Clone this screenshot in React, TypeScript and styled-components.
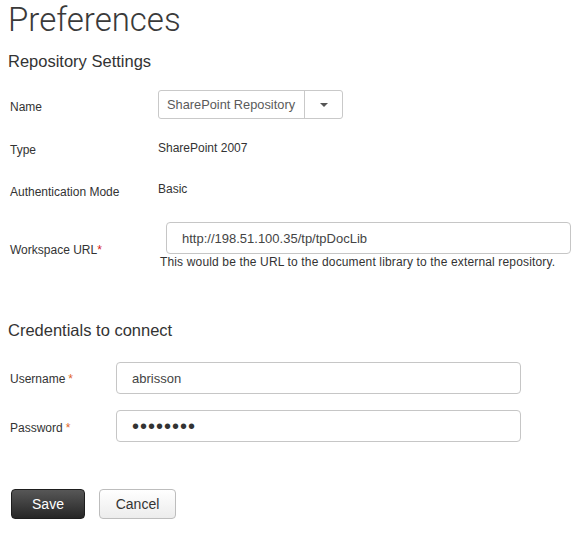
import React from 'react';
import styled, { createGlobalStyle } from 'styled-components';

const GlobalStyle = createGlobalStyle`
  html, body {
    margin: 0;
    padding: 0;
    background: #ffffff;
  }
  body {
    font-family: 'Liberation Sans', Arial, sans-serif;
    color: #333333;
  }
`;

/**
 * 页面容器
 */
const Page = styled.div`
  width: 577px;
  padding: 0 8px;
  box-sizing: border-box;
  display: flex;
  flex-direction: column;
`;

const PageTitle = styled.h1`
  margin: 0;
  font-family: Roboto, 'Liberation Sans', sans-serif;
  font-weight: 300;
  font-size: 33px;
  line-height: 39px;
  color: #3a3a3a;
`;

const SectionTitle = styled.h2<{ $top: number }>`
  margin: ${p => p.$top}px 0 0 0;
  font-weight: 400;
  font-size: 16.5px;
  line-height: 20px;
  color: #333333;
`;

/**
 * 表单行
 */
const Row = styled.div<{ $top: number; $labelWidth: number }>`
  display: grid;
  grid-template-columns: ${p => p.$labelWidth}px 1fr;
  align-items: start;
  margin-top: ${p => p.$top}px;
`;

const Label = styled.label<{ $offset: number }>`
  padding: ${p => p.$offset}px 0 0 2px;
  font-size: 12px;
  line-height: 14px;
  color: #333333;
`;

const Required = styled.span<{ $spaced?: boolean }>`
  color: ${p => (p.$spaced ? '#e0662a' : '#d42020')};
  margin-left: ${p => (p.$spaced ? '3px' : '0')};
`;

const ValueText = styled.div`
  font-size: 12px;
  line-height: 14px;
  color: #333333;
`;

/**
 * 下拉选择框
 */
const Select = styled.div`
  display: flex;
  width: 185px;
  height: 29px;
  box-sizing: border-box;
  border: 1px solid #c9c9c9;
  border-radius: 3px;
  background: #ffffff;
`;

const SelectValue = styled.div`
  flex: 1;
  display: flex;
  align-items: center;
  padding-left: 8px;
  font-size: 12.8px;
  color: #5a5a5a;
  border-right: 1px solid #c9c9c9;
`;

const SelectArrow = styled.div`
  width: 37px;
  display: flex;
  align-items: center;
  justify-content: center;

  &::after {
    content: '';
    border-left: 4px solid transparent;
    border-right: 4px solid transparent;
    border-top: 4px solid #555555;
  }
`;

const ValueColumn = styled.div`
  display: flex;
  flex-direction: column;
`;

const TextInput = styled.input<{ $indent: number; $width: number }>`
  margin-left: ${p => p.$indent}px;
  width: ${p => p.$width}px;
  height: 32px;
  box-sizing: border-box;
  border: 1px solid #c6c6c6;
  border-radius: 4px;
  padding: 0 0 0 15px;
  font-family: 'Liberation Sans', Arial, sans-serif;
  font-size: 13px;
  color: #444444;
  background: #ffffff;
  outline: none;

  &[type='password'] {
    font-size: 20px;
    letter-spacing: 1px;
    color: #333333;
  }
`;

const HelpText = styled.div`
  margin: 1px 0 0 2px;
  font-size: 12px;
  line-height: 14px;
  letter-spacing: 0.15px;
  color: #333333;
`;

const Actions = styled.div`
  display: flex;
  gap: 14px;
  margin: 47px 0 0 3px;
`;

const Button = styled.button<{ $primary?: boolean }>`
  height: 30px;
  box-sizing: border-box;
  padding: 0;
  width: ${p => (p.$primary ? '74px' : '77px')};
  border-radius: 4px;
  font-family: 'Liberation Sans', Arial, sans-serif;
  font-size: 14px;
  cursor: pointer;
  border: 1px solid ${p => (p.$primary ? '#1e1e1e' : '#bdbdbd')};
  color: ${p => (p.$primary ? '#ffffff' : '#333333')};
  background: ${p =>
    p.$primary
      ? 'linear-gradient(#575757, #262626)'
      : 'linear-gradient(#ffffff, #ececec)'};
`;

const App: React.FC = () => {
  return (
    <>
      <GlobalStyle />
      <Page>
        <PageTitle>Preferences</PageTitle>
        <SectionTitle $top={12}>Repository Settings</SectionTitle>

        <Row $top={19} $labelWidth={150}>
          <Label $offset={10}>Name</Label>
          <Select>
            <SelectValue>SharePoint Repository</SelectValue>
            <SelectArrow />
          </Select>
        </Row>

        <Row $top={22} $labelWidth={150}>
          <Label $offset={2}>Type</Label>
          <ValueText>SharePoint 2007</ValueText>
        </Row>

        <Row $top={25} $labelWidth={150}>
          <Label $offset={3}>Authentication Mode</Label>
          <ValueText>Basic</ValueText>
        </Row>

        <Row $top={23} $labelWidth={150}>
          <Label $offset={21}>
            Workspace URL<Required>*</Required>
          </Label>
          <ValueColumn>
            <TextInput
              $indent={8}
              $width={405}
              type="text"
              defaultValue="http://198.51.100.35/tp/tpDocLib"
            />
            <HelpText>
              This would be the URL to the document library to the external repository.
            </HelpText>
          </ValueColumn>
        </Row>

        <SectionTitle $top={51}>Credentials to connect</SectionTitle>

        <Row $top={22} $labelWidth={108}>
          <Label $offset={10}>
            Username<Required $spaced>*</Required>
          </Label>
          <TextInput $indent={0} $width={405} type="text" defaultValue="abrisson" />
        </Row>

        <Row $top={16} $labelWidth={108}>
          <Label $offset={11}>
            Password<Required $spaced>*</Required>
          </Label>
          <TextInput $indent={0} $width={405} type="password" defaultValue="abcdefgh" />
        </Row>

        <Actions>
          <Button $primary>Save</Button>
          <Button>Cancel</Button>
        </Actions>
      </Page>
    </>
  );
};

export default App;
